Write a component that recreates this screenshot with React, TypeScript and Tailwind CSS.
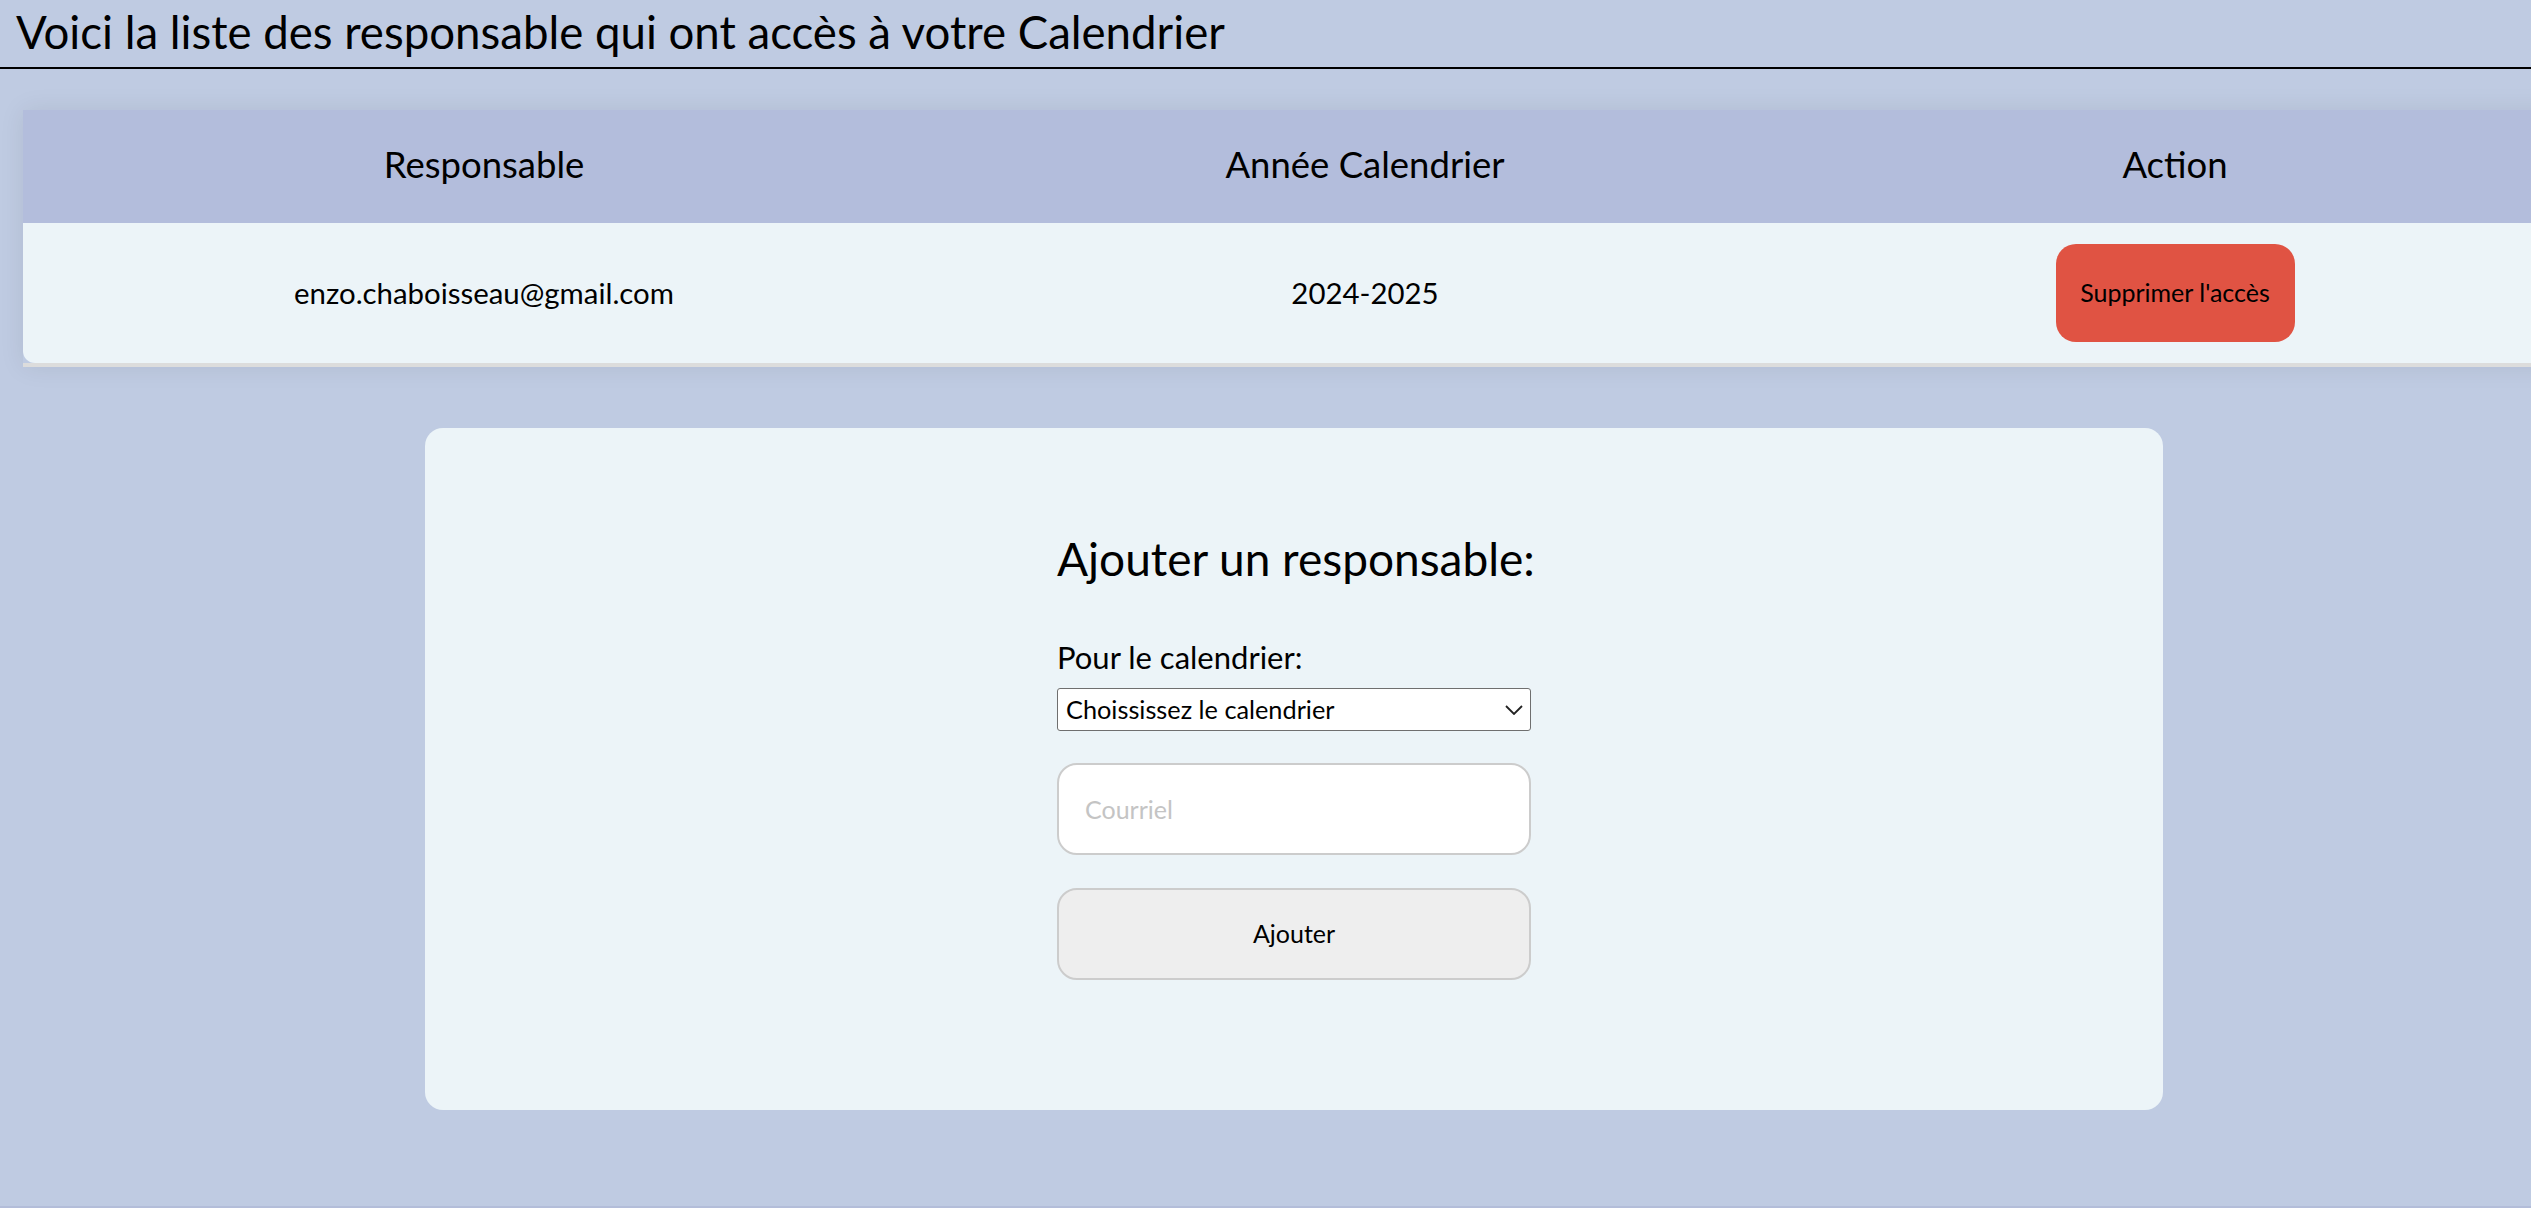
const font = { fontFamily: "Lato, 'Noto Sans', sans-serif" };

function AccessTable() {
  return (
    <div className="shadow-[0_0_24px_rgba(0,0,0,0.08)]">
      <div className="flex h-[113px] items-center bg-[#b3bddc] pb-[5px] text-[36.5px] text-black">
        <div className="w-[922px] text-center">Responsable</div>
        <div className="w-[840px] text-center">Année Calendrier</div>
        <div className="w-[780px] text-center">Action</div>
      </div>
      <div className="flex h-[140px] items-center rounded-bl-[12px] bg-[#ecf4f8] text-[29.4px] text-black">
        <div className="w-[922px] text-center">enzo.chaboisseau@gmail.com</div>
        <div className="w-[840px] text-center">2024-2025</div>
        <div className="flex w-[780px] justify-center">
          <button className="h-[98px] w-[239px] rounded-[20px] bg-[#e05343] text-[25px] text-black">
            Supprimer l'accès
          </button>
        </div>
      </div>
      <div className="h-[4px] bg-[#dcdcdc]" />
    </div>
  );
}

function AddForm() {
  return (
    <div className="mx-auto mt-[61px] flex h-[682px] w-[1738px] justify-center rounded-[18px] bg-[#ecf4f8] pt-[107px]">
      <div className="flex w-[474px] flex-col">
        <h2 className="h-[48px] text-[46px] leading-[48px] whitespace-nowrap text-black">
          Ajouter un responsable:
        </h2>
        <label className="mt-[58px] h-[32px] text-[31px] leading-[32px] text-black">
          Pour le calendrier:
        </label>
        <div className="relative mt-[15px] h-[43px]">
          <select
            defaultValue=""
            className="h-full w-full appearance-none rounded-[3px] border border-[#6f6f6f] bg-white pl-[8px] text-[25.3px] text-black outline-none"
            style={font}
          >
            <option value="">Choississez le calendrier</option>
            <option value="2024">2024-2025</option>
          </select>
          {/* native-looking chevron */}
          <svg
            className="pointer-events-none absolute top-[17px] right-[8px]"
            width="18"
            height="10"
            viewBox="0 0 18 10"
            fill="none"
          >
            <polyline points="1,1 9,9 17,1" stroke="#222" strokeWidth="1.8" />
          </svg>
        </div>
        <input
          placeholder="Courriel"
          className="mt-[32px] h-[92px] w-full rounded-[20px] border-2 border-[#cccccc] bg-white px-[26px] text-[25px] text-black outline-none placeholder:text-[#c4c4c4]"
          style={font}
        />
        <button
          className="mt-[33px] h-[92px] w-full rounded-[20px] border-2 border-[#cccccc] bg-[#eeeeee] text-[25px] text-black"
          style={font}
        >
          Ajouter
        </button>
      </div>
    </div>
  );
}

export default function App() {
  return (
    <div className="flex h-[1208px] w-full flex-col overflow-hidden bg-[#bfcbe2]" style={font}>
      <div className="flex h-[69px] shrink-0 items-center border-b-2 border-black pb-[3px] pl-[16px]">
        <h1 className="text-[45.6px] whitespace-nowrap text-black">
          Voici la liste des responsable qui ont accès à votre Calendrier
        </h1>
      </div>
      <div className="w-[2588px] shrink-0 px-[23px] pt-[41px]">
        <AccessTable />
        <AddForm />
      </div>
      <div className="flex-1" />
      <div className="h-[2px] shrink-0 bg-[#b3bdd9]" />
    </div>
  );
}
